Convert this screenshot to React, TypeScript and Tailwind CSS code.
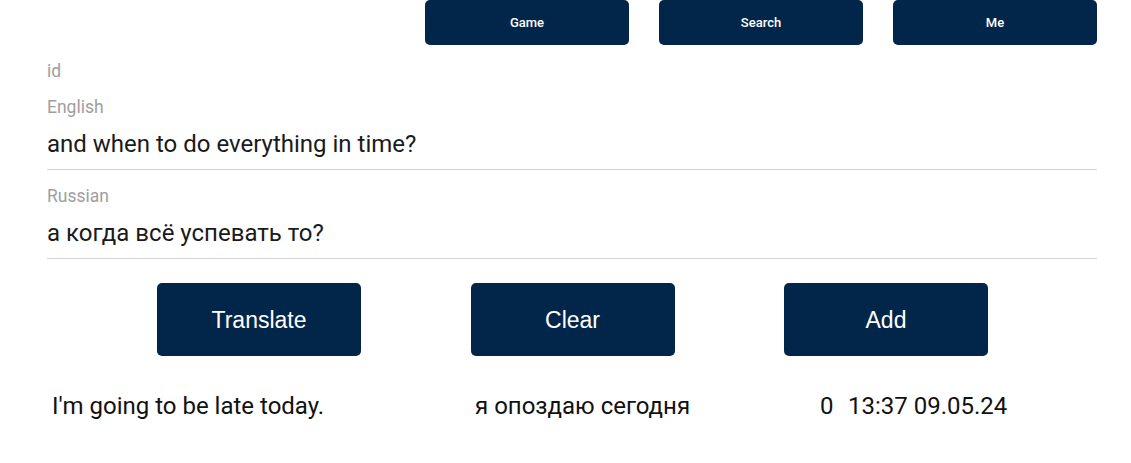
const navItems = ['Game', 'Search', 'Me'];
const actions = ['Translate', 'Clear', 'Add'];

const Field = ({ label, value }: { label: string; value: string }) => (
    <div className="mt-[16px] flex flex-col">
        <label className="text-[17.5px] leading-[20px] text-[#9e9e9e]">{label}</label>
        <div className="mt-[12px] border-b border-[#d4d4d4] pb-[10px] text-[24px] leading-[30px] text-[#1a1a1a]">
            {value}
        </div>
    </div>
);

const App = () => {
    return (
        <div className="h-[463px] w-[1131px] bg-white font-['Roboto',sans-serif]">
            <div className="ml-[47px] w-[1050px]">
                <nav className="flex justify-end gap-[30px]">
                    {navItems.map((item) => (
                        <button
                            key={item}
                            className="h-[45px] w-[204px] rounded-[5px] bg-[#02264a] text-[13px] font-medium text-white"
                        >
                            {item}
                        </button>
                    ))}
                </nav>
                <div className="mt-[16px] text-[17.5px] leading-[20px] text-[#9e9e9e]">id</div>
                <Field label="English" value="and when to do everything in time?" />
                <Field label="Russian" value="а когда всё успевать то?" />
                <div className="mt-[24px] flex gap-[109.5px] pl-[110px]">
                    {actions.map((item) => (
                        <button
                            key={item}
                            className="h-[73px] w-[204px] rounded-[5px] bg-[#02264a] pt-[2px] font-['Liberation_Sans',sans-serif] text-[23px] text-white"
                        >
                            {item}
                        </button>
                    ))}
                </div>
                <div className="mt-[34px] flex items-center text-[24px] leading-[32px] text-[#111]">
                    <span className="ml-[5px] w-[423px]">I'm going to be late today.</span>
                    <span className="w-[345px]">я опоздаю сегодня</span>
                    <span className="w-[28px]">0</span>
                    <span>13:37 09.05.24</span>
                </div>
            </div>
        </div>
    );
};

export default App;
